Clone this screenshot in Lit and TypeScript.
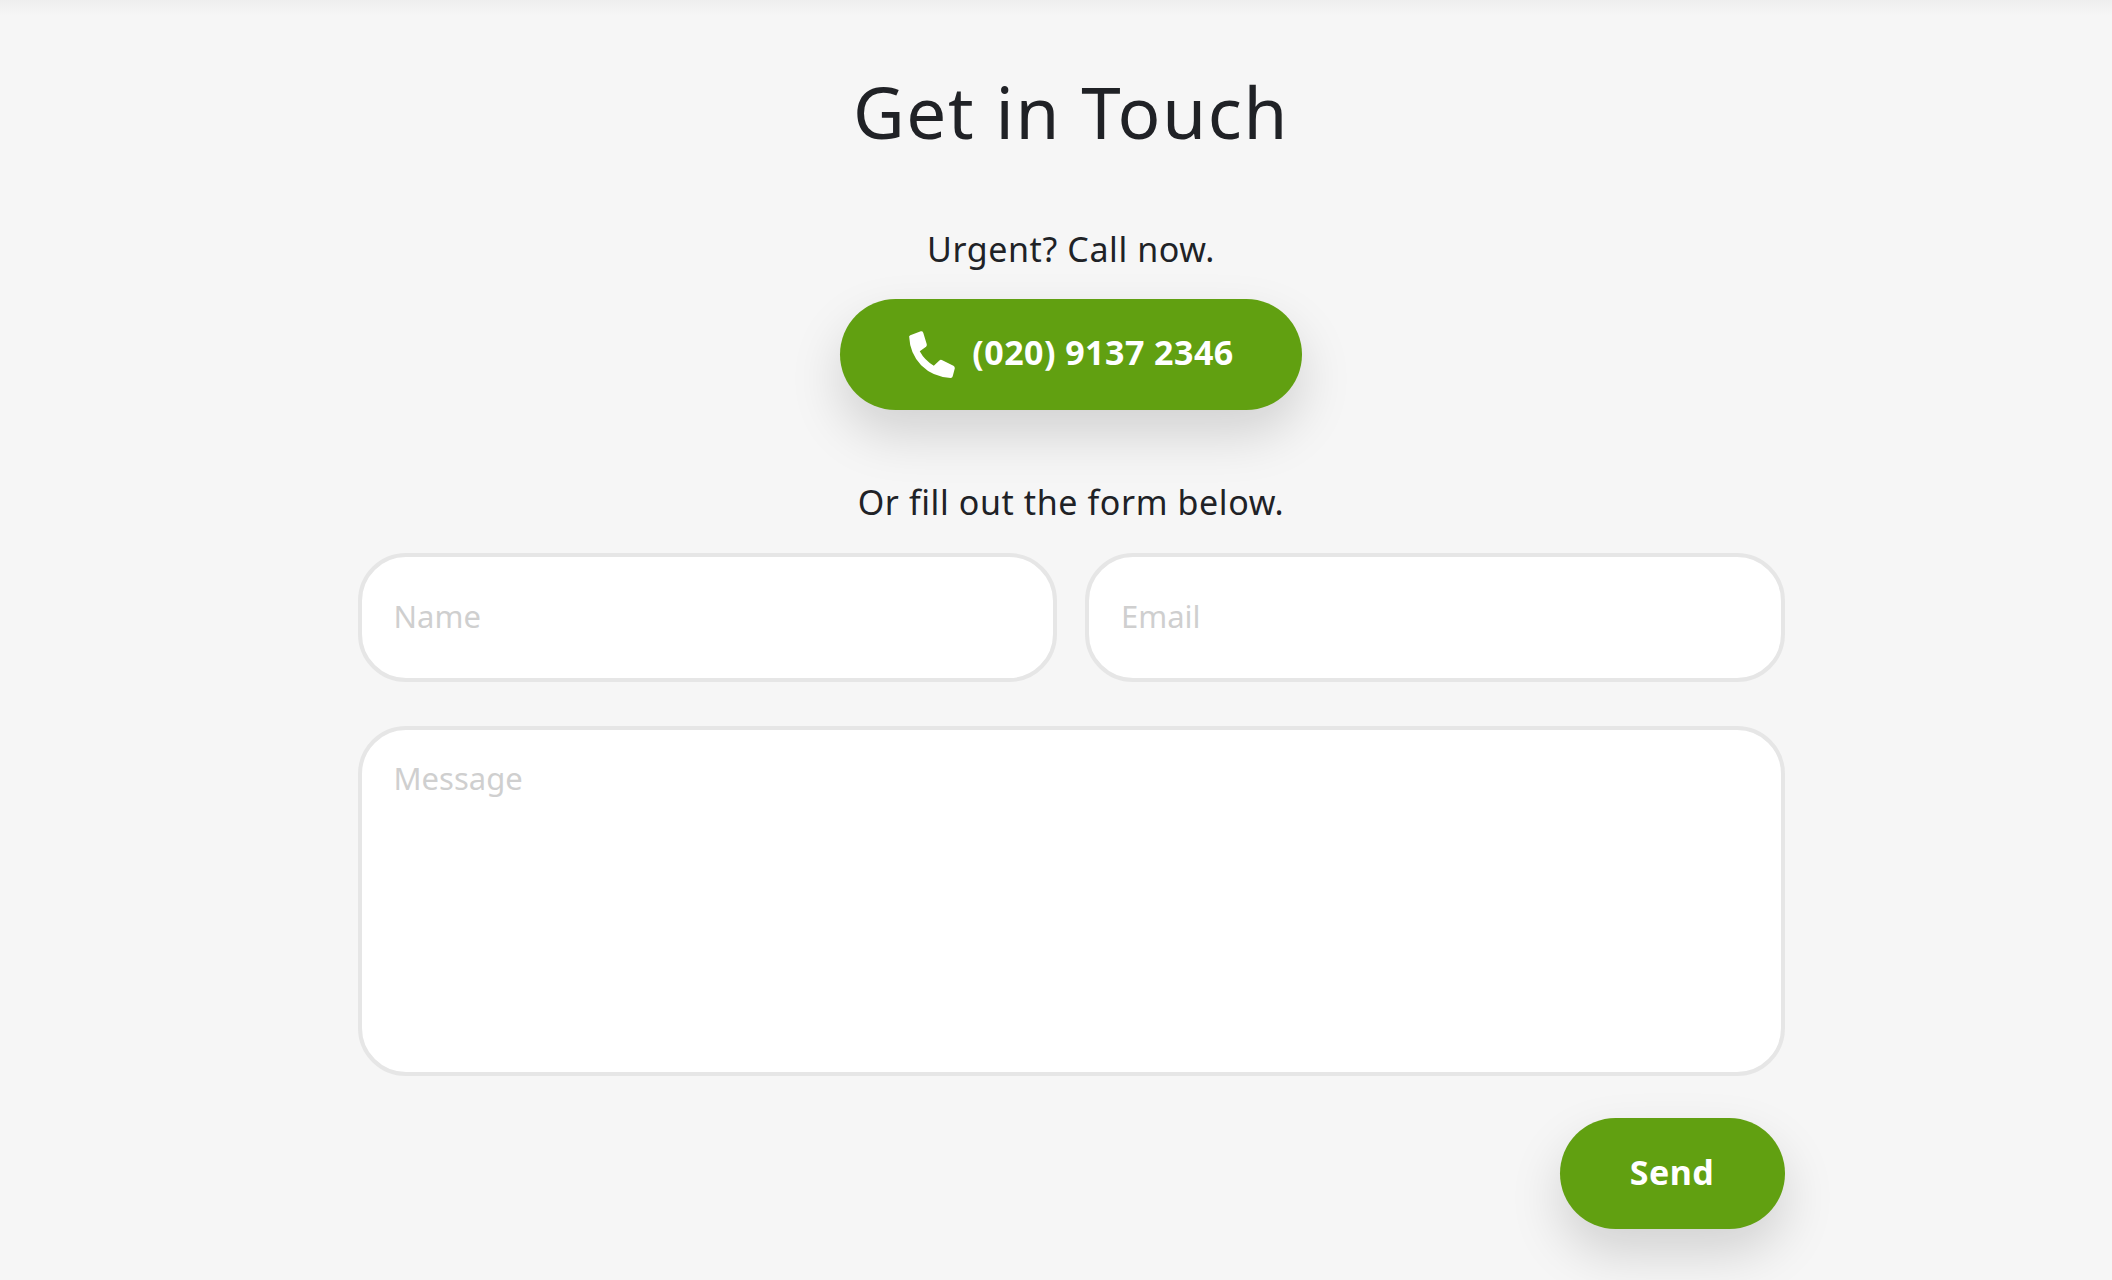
import { LitElement, html, css } from "lit";
import { customElement } from "lit/decorators.js";

@customElement("app-root")
export class AppRoot extends LitElement {
  static styles = css`
    :host {
      display: block;
      min-height: 1280px;
      box-sizing: border-box;
      background: #f6f6f6;
      padding-left: 30px;
      font-family: "Noto Sans", sans-serif;
      color: #202226;
    }
    .top {
      height: 16px;
      margin-left: -30px;
      background: linear-gradient(#eeeeee, #f6f6f6);
    }
    .wrap {
      width: 1427px;
      margin: 0 auto;
      display: flex;
      flex-direction: column;
      align-items: center;
    }
    h1 {
      margin: 51px 0 0;
      font-size: 71px;
      line-height: 90px;
      font-weight: 400;
      letter-spacing: 1.7px;
    }
    .lead {
      margin: 0;
      font-size: 34px;
      line-height: 46px;
      font-weight: 400;
      letter-spacing: 0.6px;
    }
    .urgent { margin-top: 69px; }
    .btn {
      display: flex;
      align-items: center;
      justify-content: center;
      box-sizing: border-box;
      border: none;
      border-radius: 56px;
      height: 111px;
      background: #61a011;
      color: #fff;
      font-family: inherit;
      font-weight: 700;
      font-size: 34px;
      letter-spacing: 0.45px;
      box-shadow: 0 24px 52px rgba(0, 0, 0, 0.15);
    }
    .call {
      width: 462px;
      margin-top: 27px;
      gap: 17px;
    }
    .call svg { width: 47px; height: 47px; }
    .call span { margin-bottom: 5px; }
    .fill { margin-top: 69px; }
    form {
      width: 100%;
      margin-top: 28px;
      display: flex;
      flex-direction: column;
    }
    .row {
      display: grid;
      grid-template-columns: 1fr 1fr;
      gap: 28px;
    }
    input, textarea {
      display: block;
      box-sizing: border-box;
      width: 100%;
      border: 4px solid #e6e6e6;
      background: #fff;
      border-radius: 48px;
      padding: 0 32px;
      font-family: inherit;
      font-size: 31px;
      color: #202226;
      outline: none;
      resize: none;
    }
    input { height: 129px; padding-bottom: 3px; }
    textarea {
      height: 350px;
      margin-top: 44px;
      padding-top: 27px;
      line-height: 42px;
    }
    ::placeholder { color: #cfcfcf; opacity: 1; }
    .send {
      width: 225px;
      margin-top: 42px;
      padding-bottom: 5px;
      align-self: flex-end;
    }
  `;

  render() {
    return html`
      <div class="top"></div>
      <div class="wrap">
        <h1>Get in Touch</h1>
        <p class="lead urgent">Urgent? Call now.</p>
        <a class="btn call">
          <svg viewBox="57 38 133 134" fill="#fff">
            <path d="M60 56 Q58 52 63 50 L93 39 Q98 38 100 43 L110 76 Q111 80 108 83 L90 96 Q104 122 130 137 L146 122 Q149 119 153 121 L186 137 Q190 139 190 144 L184 167 Q183 172 178 172 Q128 170 94 136 Q62 102 60 56 Z" />
          </svg>
          <span>(020) 9137 2346</span>
        </a>
        <p class="lead fill">Or fill out the form below.</p>
        <form>
          <div class="row">
            <input type="text" placeholder="Name" />
            <input type="email" placeholder="Email" />
          </div>
          <textarea placeholder="Message"></textarea>
          <button class="btn send" type="button">Send</button>
        </form>
      </div>
    `;
  }
}
